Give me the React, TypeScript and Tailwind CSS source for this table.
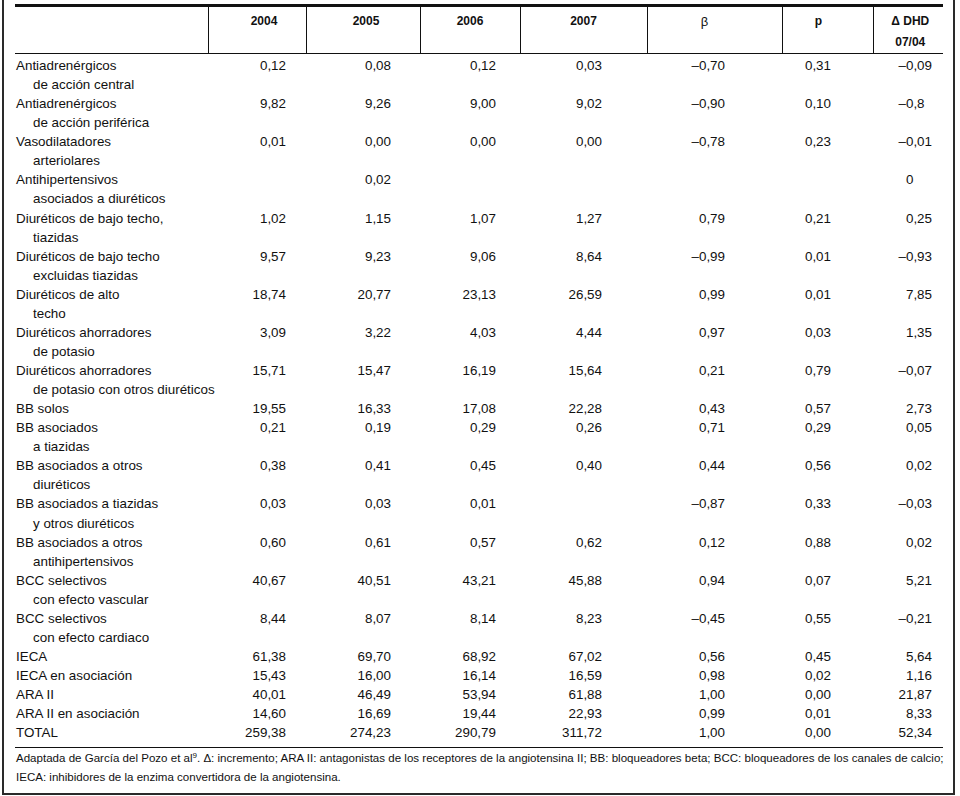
import React from "react";

type Row = { label: string[]; values: string[] };

const rows: Row[] = [
  { label: ["Antiadrenérgicos", "de acción central"], values: ["0,12", "0,08", "0,12", "0,03", "–0,70", "0,31", "–0,09"] },
  { label: ["Antiadrenérgicos", "de acción periférica"], values: ["9,82", "9,26", "9,00", "9,02", "–0,90", "0,10", "–0,8"] },
  { label: ["Vasodilatadores", "arteriolares"], values: ["0,01", "0,00", "0,00", "0,00", "–0,78", "0,23", "–0,01"] },
  { label: ["Antihipertensivos", "asociados a diuréticos"], values: ["", "0,02", "", "", "", "", "0"] },
  { label: ["Diuréticos de bajo techo,", "tiazidas"], values: ["1,02", "1,15", "1,07", "1,27", "0,79", "0,21", "0,25"] },
  { label: ["Diuréticos de bajo techo", "excluidas tiazidas"], values: ["9,57", "9,23", "9,06", "8,64", "–0,99", "0,01", "–0,93"] },
  { label: ["Diuréticos de alto", "techo"], values: ["18,74", "20,77", "23,13", "26,59", "0,99", "0,01", "7,85"] },
  { label: ["Diuréticos ahorradores", "de potasio"], values: ["3,09", "3,22", "4,03", "4,44", "0,97", "0,03", "1,35"] },
  { label: ["Diuréticos ahorradores", "de potasio con otros diuréticos"], values: ["15,71", "15,47", "16,19", "15,64", "0,21", "0,79", "–0,07"] },
  { label: ["BB solos"], values: ["19,55", "16,33", "17,08", "22,28", "0,43", "0,57", "2,73"] },
  { label: ["BB asociados", "a tiazidas"], values: ["0,21", "0,19", "0,29", "0,26", "0,71", "0,29", "0,05"] },
  { label: ["BB asociados a otros", "diuréticos"], values: ["0,38", "0,41", "0,45", "0,40", "0,44", "0,56", "0,02"] },
  { label: ["BB asociados a tiazidas", "y otros diuréticos"], values: ["0,03", "0,03", "0,01", "", "–0,87", "0,33", "–0,03"] },
  { label: ["BB asociados a otros", "antihipertensivos"], values: ["0,60", "0,61", "0,57", "0,62", "0,12", "0,88", "0,02"] },
  { label: ["BCC selectivos", "con efecto vascular"], values: ["40,67", "40,51", "43,21", "45,88", "0,94", "0,07", "5,21"] },
  { label: ["BCC selectivos", "con efecto cardiaco"], values: ["8,44", "8,07", "8,14", "8,23", "–0,45", "0,55", "–0,21"] },
  { label: ["IECA"], values: ["61,38", "69,70", "68,92", "67,02", "0,56", "0,45", "5,64"] },
  { label: ["IECA en asociación"], values: ["15,43", "16,00", "16,14", "16,59", "0,98", "0,02", "1,16"] },
  { label: ["ARA II"], values: ["40,01", "46,49", "53,94", "61,88", "1,00", "0,00", "21,87"] },
  { label: ["ARA II en asociación"], values: ["14,60", "16,69", "19,44", "22,93", "0,99", "0,01", "8,33"] },
  { label: ["TOTAL"], values: ["259,38", "274,23", "290,79", "311,72", "1,00", "0,00", "52,34"] },
];

// right padding per numeric column, so figures sit where the printed table has them
const numPad = ["pr-[20px]", "pr-[29px]", "pr-[24px]", "pr-[45px]", "pr-[57px]", "pr-[42px]", "pr-[11px]"];

// decimal alignment: fill the missing decimals with invisible digits
function Num({ v }: { v: string }) {
  if (!v) return null;
  const [, dec] = v.split(",");
  const pad = dec === undefined ? ",00" : "0".repeat(Math.max(0, 2 - dec.length));
  return (
    <>
      {v}
      {pad && <span className="invisible">{pad}</span>}
    </>
  );
}

export default function App() {
  return (
    <div
      className="bg-white min-h-[796px] text-[#111]"
      style={{ fontFamily: '"Liberation Sans", Arial, sans-serif' }}
    >
      <div className="ml-[2px] w-[953px] border-x-2 border-b-2 border-[#2a2a2a] pt-[4px] pl-[11px] pr-[10px]">
        <table className="w-[928px] table-fixed border-collapse">
          <colgroup>
            <col className="w-[193px]" />
            <col className="w-[98px]" />
            <col className="w-[114px]" />
            <col className="w-[100px]" />
            <col className="w-[127px]" />
            <col className="w-[135px]" />
            <col className="w-[91px]" />
            <col className="w-[70px]" />
          </colgroup>
          <thead>
            <tr className="border-t-[3px] border-b border-[#111] text-[12px] font-bold leading-[21px] align-top">
              <th className="pt-[4px]" />
              <th className="pt-[4px] pl-[14px] text-center border-l border-[#111]">2004</th>
              <th className="pt-[4px] pl-[6px] text-center border-l border-[#111]">2005</th>
              <th className="pt-[4px] text-center border-l border-[#111]">2006</th>
              <th className="pt-[4px] text-center border-l border-[#111]">2007</th>
              <th className="pt-[4px] pr-[20px] text-center font-normal text-[13px] border-l border-[#111]">β</th>
              <th className="pt-[4px] pr-[18px] text-center border-l border-[#111]">p</th>
              <th className="pt-[4px] pl-[4px] text-center border-l border-[#111]">
                <div>Δ DHD</div>
                <div>07/04</div>
              </th>
            </tr>
          </thead>
          <tbody className="text-[13.4px] leading-[19.06px]">
            {rows.map((r, i) => {
              const pad = i === 0 ? "pt-[2px]" : i === rows.length - 1 ? "pb-[5px]" : "";
              return (
                <tr key={i} className="align-top">
                  <td className={`pl-[1px] whitespace-nowrap ${pad}`}>
                    <div>{r.label[0]}</div>
                    {r.label[1] && <div className="pl-[17px]">{r.label[1]}</div>}
                  </td>
                  {r.values.map((v, j) => (
                    <td key={j} className={`text-right whitespace-nowrap ${numPad[j]} ${pad}`}>
                      <Num v={v} />
                    </td>
                  ))}
                </tr>
              );
            })}
          </tbody>
        </table>
        <div className="w-[928px] border-t border-[#111] pl-[1px] pt-[1px] pb-[6px] text-[11.55px] leading-[19px] whitespace-nowrap">
          Adaptada de García del Pozo et al<sup className="text-[8px]">9</sup>. Δ: incremento; ARA II: antagonistas de los
          receptores de la angiotensina II; BB: bloqueadores beta; BCC: bloqueadores de los canales de calcio;
          <br />
          IECA: inhibidores de la enzima convertidora de la angiotensina.
        </div>
      </div>
    </div>
  );
}
